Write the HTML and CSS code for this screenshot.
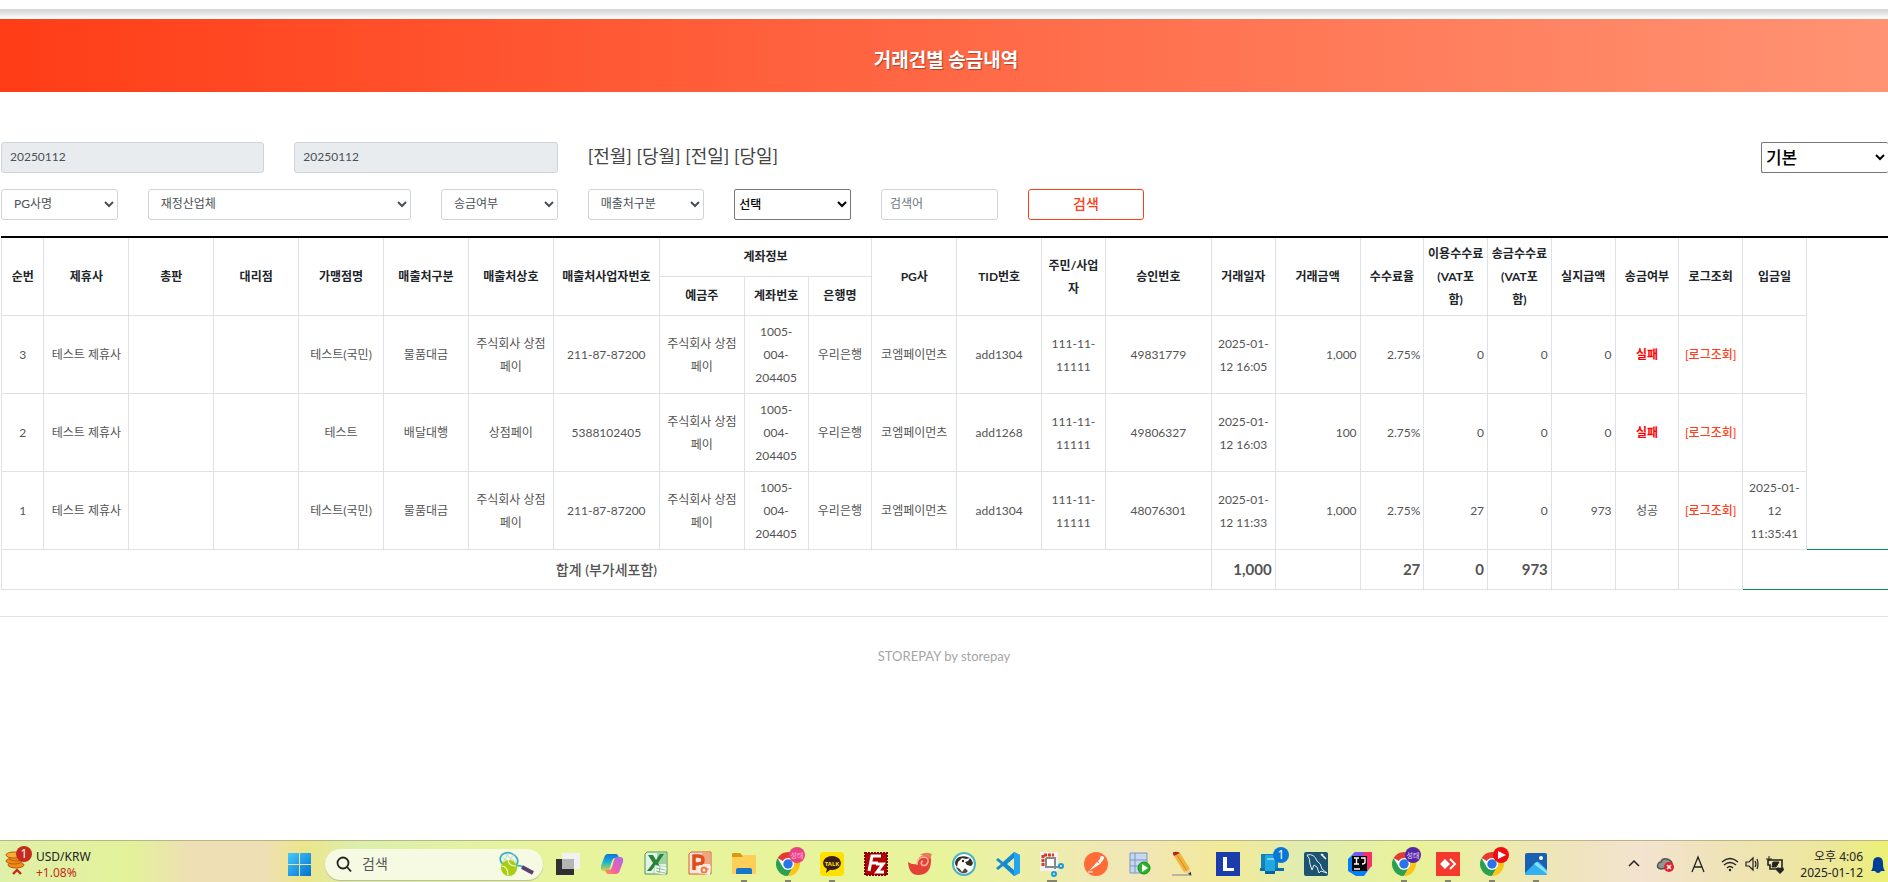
FILE: index.html
```html
<!DOCTYPE html>
<html lang="ko">
<head>
<meta charset="utf-8">
<title>거래건별 송금내역</title>
<link rel="stylesheet" href="styles.css">
</head>
<body>
<div class="topbar"></div>
<header class="hero"><h1 class="hero-title">거래건별 송금내역</h1></header>

<main class="content">
  <form class="filters">
    <input class="control span-2" type="text" aria-label="시작일" value="20250112" readonly>
    <input class="control span-2" type="text" aria-label="종료일" value="20250112" readonly>
    <nav class="ranges"><a href="#">[전월]</a> <a href="#">[당월]</a> <a href="#">[전일]</a> <a href="#">[당일]</a></nav>
    <select class="plain plain-large" aria-label="보기"><option>기본</option></select>

    <select class="control first" aria-label="PG사명"><option>PG사명</option></select>
    <select class="control span-2" aria-label="재정산업체"><option>재정산업체</option></select>
    <select class="control" aria-label="송금여부"><option>송금여부</option></select>
    <select class="control" aria-label="매출처구분"><option>매출처구분</option></select>
    <select class="plain" aria-label="검색조건"><option>선택</option></select>
    <input class="control" type="text" aria-label="검색어" placeholder="검색어">
    <button class="search-button" type="button">검색</button>
  </form>

  <table class="ledger">
    <colgroup>
      <col class="w2"><col class="w4"><col class="w4"><col class="w4"><col class="w4"><col class="w4"><col class="w4"><col class="w5">
      <col class="w4"><col class="w3"><col class="w3"><col class="w4"><col class="w4"><col class="w3"><col class="w5"><col class="w3">
      <col class="w4"><col class="w3"><col class="w3"><col class="w3"><col class="w3"><col class="w3"><col class="w3"><col class="w3"><col>
    </colgroup>
    <thead>
      <tr>
        <th rowspan="2">순번</th><th rowspan="2">제휴사</th><th rowspan="2">총판</th><th rowspan="2">대리점</th><th rowspan="2">가맹점명</th><th rowspan="2">매출처구분</th><th rowspan="2">매출처상호</th><th rowspan="2">매출처사업자번호</th>
        <th colspan="3">계좌정보</th>
        <th rowspan="2">PG사</th><th rowspan="2">TID번호</th><th rowspan="2">주민/사업자</th><th rowspan="2">승인번호</th><th rowspan="2">거래일자</th><th rowspan="2">거래금액</th><th rowspan="2">수수료율</th><th rowspan="2">이용수수료<br>(VAT포<br>함)</th><th rowspan="2">송금수수료<br>(VAT포<br>함)</th><th rowspan="2">실지급액</th><th rowspan="2">송금여부</th><th rowspan="2">로그조회</th><th rowspan="2">입금일</th><td class="open" rowspan="2"></td>
      </tr>
      <tr><th>예금주</th><th>계좌번호</th><th>은행명</th></tr>
    </thead>
    <tbody>
      <tr>
        <td>3</td><td>테스트 제휴사</td><td></td><td></td><td>테스트(국민)</td><td>물품대금</td><td>주식회사 상점페이</td><td>211-87-87200</td><td>주식회사 상점페이</td><td>1005-004-204405</td><td>우리은행</td><td>코엠페이먼츠</td><td>add1304</td><td>111-11-11111</td><td>49831779</td><td>2025-01-12 16:05</td>
        <td class="num">1,000</td><td class="num">2.75%</td><td class="num">0</td><td class="num">0</td><td class="num">0</td><td class="fail">실패</td><td><a class="log" href="#">[로그조회]</a></td><td></td><td class="open"></td>
      </tr>
      <tr>
        <td>2</td><td>테스트 제휴사</td><td></td><td></td><td>테스트</td><td>배달대행</td><td>상점페이</td><td>5388102405</td><td>주식회사 상점페이</td><td>1005-004-204405</td><td>우리은행</td><td>코엠페이먼츠</td><td>add1268</td><td>111-11-11111</td><td>49806327</td><td>2025-01-12 16:03</td>
        <td class="num">100</td><td class="num">2.75%</td><td class="num">0</td><td class="num">0</td><td class="num">0</td><td class="fail">실패</td><td><a class="log" href="#">[로그조회]</a></td><td></td><td class="open"></td>
      </tr>
      <tr>
        <td>1</td><td>테스트 제휴사</td><td></td><td></td><td>테스트(국민)</td><td>물품대금</td><td>주식회사 상점페이</td><td>211-87-87200</td><td>주식회사 상점페이</td><td>1005-004-204405</td><td>우리은행</td><td>코엠페이먼츠</td><td>add1304</td><td>111-11-11111</td><td>48076301</td><td>2025-01-12 11:33</td>
        <td class="num">1,000</td><td class="num">2.75%</td><td class="num">27</td><td class="num">0</td><td class="num">973</td><td>성공</td><td><a class="log" href="#">[로그조회]</a></td><td>2025-01-12 11:35:41</td><td class="open lined"></td>
      </tr>
    </tbody>
    <tfoot>
      <tr class="total">
        <td colspan="15">합계 (부가세포함)</td><td class="num">1,000</td><td></td><td class="num">27</td><td class="num">0</td><td class="num">973</td><td></td><td></td><td></td><td class="open lined" colspan="2"></td>
      </tr>
    </tfoot>
  </table>
</main>

<footer class="footer">STOREPAY by storepay</footer>

<div class="taskbar">
  <div class="widget">
    <svg class="widget-icon" width="34" height="42" viewBox="0 0 34 42">
      <g fill="#ef8a17" stroke="#b95c08"><ellipse cx="16" cy="25" rx="8" ry="3"/><ellipse cx="14" cy="21" rx="8" ry="3"/><ellipse cx="17" cy="18" rx="8" ry="3"/><ellipse cx="14" cy="15" rx="8" ry="3" fill="#ffad32"/></g>
      <path d="M13 34l4-4 4 4" fill="none" stroke="#c42b1c" stroke-width="2.4"/>
      <circle cx="24" cy="14" r="8" fill="#c42b1c"/><text x="24" y="18" text-anchor="middle" font-size="12" fill="#fff">1</text>
    </svg>
    <div class="widget-text"><span>USD/KRW</span><span class="rise">+1.08%</span></div>
  </div>
  <svg class="app" viewBox="0 0 44 42"><defs><linearGradient id="win" x1="0" y1="0" x2="1" y2="1"><stop offset="0" stop-color="#47c9fa"/><stop offset="1" stop-color="#0071d2"/></linearGradient></defs><path fill="url(#win)" d="M11 13h11v11H11zM23 13h11v11H23zM11 25h11v11H11zM23 25h11v11H23z"/></svg>
  <div class="search">
    <svg width="18" height="18" viewBox="0 0 18 18" fill="none" stroke="#222" stroke-width="1.8"><circle cx="8" cy="8" r="5.5"/><path d="M12 12l4 4.500"/></svg>
    <label class="search-label" for="q">검색</label><input class="search-input" id="q" type="text">
    <svg width="36" height="26" viewBox="0 0 36 26">
      <ellipse cx="10" cy="9" rx="9" ry="7" transform="rotate(22 10 9)" fill="#f1f6ea" stroke="#39b6b8" stroke-width="1.8"/><path d="M3 6l13 9M6 3l12 9M3 12l7-10M7 15l8-12" stroke="#b9c9b6" stroke-width=".6"/>
      <path d="M16 15q4-1 8 1" fill="none" stroke="#39b6b8" stroke-width="1.800"/><path d="M23 16l11 6" stroke="#564170" stroke-width="4"/><circle cx="10" cy="17" r="8" fill="#a9cc14"/><path d="M3 15q6 1 6 9M9 9q1 6 8 6" fill="none" stroke="#f5fbd2" stroke-width="1.200"/>
    </svg>
  </div>
  <div class="apps">
    <svg class="app" viewBox="0 0 44 42"><path d="M10 19h18v16H10z" fill="#303030"/><path d="M16 13h18v16H16z" fill="#f1f1f1"/><path d="M16 19h12v10H16z" fill="#b5b5b5"/></svg>
    <svg class="app" viewBox="0 0 44 42"><defs><linearGradient id="cpa" x1="0" y1="0" x2="0" y2="1"><stop offset="0" stop-color="#1470dd"/><stop offset=".5" stop-color="#19b7cf"/><stop offset="1" stop-color="#e5cf3b"/></linearGradient><linearGradient id="cpb" x1="1" y1="0" x2="0" y2="1"><stop offset="0" stop-color="#a66df0"/><stop offset=".6" stop-color="#ef5faa"/><stop offset="1" stop-color="#ff9848"/></linearGradient></defs><path d="M18 14h8q2 0 3 4h-4q-2 0-3 3l-2 7q-1 3-4 3h-2q-4 0-3-5l3-8q1-4 4-4z" fill="url(#cpa)"/><path d="M26 34h-8q-2 0-3-4h4q2 0 3-3l2-7q1-3 4-3h2q4 0 3 5l-3 8q-1 4-4 4z" fill="url(#cpb)"/></svg>
    <svg class="app" viewBox="0 0 44 42"><path d="M13 12h20v22H11V14z" fill="#e4f2e3" stroke="#4d9557"/><path d="M23 13h9v11h-9z" fill="#9fd29f"/><path d="M14 15h5l3 5 4-6h4l-6 9 5 8h-5l-3-5-4 5h-4l6-8z" fill="#26843a"/><path d="M21 25l12 2-2 8-11-2z" fill="#f5faf4" stroke="#91b894" stroke-width=".5"/><path d="M22 28l9 2M22 31l9 2M26 26l-1 7" stroke="#67a66d" stroke-width=".7"/></svg>
    <svg class="app" viewBox="0 0 44 42"><path d="M13 12h20v22H11V14z" fill="#fae5d6" stroke="#d35f34"/><path d="M24 13h8v11h-8z" fill="#f1a680"/><path d="M16 30V16h4q5 0 5 4t-5 4h-3" fill="none" stroke="#df4c1f" stroke-width="3.500"/><path d="M21 25l12 1-1 9-12-2z" fill="#fff3ea"/><circle cx="26" cy="30" r="2.500" fill="none" stroke="#ee7a43" stroke-width="2"/><path d="M27 29h4" stroke="#ee7a43"/></svg>
    <svg class="app" viewBox="0 0 44 42"><path d="M10 14q0-1 1-1h7l3 3v4H10z" fill="#d99a11"/><path d="M10 17h10l2-2h11q1 0 1 1v17q0 1-1 1H10z" fill="#ffcf57"/><path d="M14 34v-4q0-2 2-2h12q2 0 2 2v4z" fill="#1676c8"/><path class="run" d="M19 40h6v2h-6z"/></svg>
    <svg class="app" viewBox="0 0 44 42"><g id="chrome"><circle cx="22" cy="24" r="12" fill="#fff"/><path d="M22 24L11.600 18A12 12 0 0 1 32.400 18H22z" fill="#e33b2e"/><path d="M11.600 18A12 12 0 0 0 22 36l5.200-9L22 24l-5.200 3z" fill="#2ca14b"/><path d="M32.400 18A12 12 0 0 1 22 36l5.200-9a6 6 0 0 0 0-6L22 18z" fill="#fbc515"/><circle cx="22" cy="24" r="6" fill="#fff"/><circle cx="22" cy="24" r="4.700" fill="#2b73e8"/><path class="run" d="M19 40h6v2h-6z"/></g><circle cx="31" cy="15" r="8" fill="#e84283"/><text x="31" y="18" text-anchor="middle" font-size="7" fill="#fbd">성태</text></svg>
    <svg class="app" viewBox="0 0 44 42"><rect x="10" y="12" width="24" height="24" rx="3" fill="#ffe100"/><ellipse cx="22" cy="23" rx="9" ry="7" fill="#3a1d1f"/><path d="M17 28l-1 5 5-4z" fill="#3a1d1f"/><text x="22" y="26" text-anchor="middle" font-size="6" font-weight="700" fill="#ffe100">TALK</text><path class="run" d="M19 40h6v2h-6z"/></svg>
    <svg class="app" viewBox="0 0 44 42"><path d="M11 13h22v22H11z" fill="#b00000" stroke="#800000" stroke-width="2" stroke-dasharray="2 1"/><path d="M15 31l3-15h9M17 23h7M22 24h7l-6 8h7" fill="none" stroke="#fff" stroke-width="3"/></svg>
    <svg class="app" viewBox="0 0 44 42"><path d="M10 22q4 3 9 2 0-8 8-9 7 0 6 7-1 13-13 13-9 0-10-13z" fill="#e54237"/><path d="M19 25q0-7 6-8 6 0 5 5-2 5-6 3-2-3 1-4" fill="none" stroke="#ffb39c" stroke-width="1.600"/><path d="M22 15q5-4 12-1l-2 5q-4-4-10-4z" fill="#ee7a5c"/></svg>
    <svg class="app" viewBox="0 0 44 42"><circle cx="22" cy="24" r="11" fill="#fff" stroke="#4bb4c3" stroke-width="2"/><path d="M13 24q0-5 4-7 6-2 11 1l-4 1-4-1-4 4-1 5z" fill="#342c2a"/><path d="M28 18q5 5 1 8l-4-1-2-3 3-1z" fill="#342c2a"/><path d="M14 27q4 1 6 5l3-4 3 3q-2 3-6 2-4-1-6-6z" fill="#554a46"/><circle cx="21" cy="21" r="1.200" fill="#222"/></svg>
    <svg class="app" viewBox="0 0 44 42"><path d="M28 12l6 3v18l-6 3-11-10-5 4-2-2 5-4-5-4 2-2 5 4zM28 18l-7 6 7 6z" fill="#138bd2" fill-rule="evenodd"/><path d="M28 12l6 3v18l-6 3z" fill="#25a5f0"/></svg>
    <svg class="app" viewBox="0 0 44 42"><rect x="10" y="12" width="18" height="19" rx="1" fill="#f2f2f2"/><path d="M13 26V15h11" fill="none" stroke="#dc3b17" stroke-width="3" stroke-dasharray="3 1"/><path d="M17 19h8v8h-8z" fill="#fff"/><path d="M16 18h9v11M16 18v9h13" fill="none" stroke="#888" stroke-width="2"/><g fill="none" stroke="#189bde" stroke-width="2"><circle cx="31" cy="26" r="2"/><circle cx="24" cy="34" r="2"/></g><path class="run" d="M17 40h10v2H17z"/></svg>
    <svg class="app" viewBox="0 0 44 42"><circle cx="22" cy="24" r="12" fill="#ff6c37"/><path d="M15 31l8-9 3 2zM24 21l3-3 2 2-3 4z" fill="#fff"/><circle cx="28" cy="18" r="2" fill="#fff"/><path d="M14 32h5" stroke="#fff"/></svg>
    <svg class="app" viewBox="0 0 44 42"><g fill="#c4d8f0" stroke="#7c97c0"><path d="M12 13h17v20H12z"/><path d="M12 20h17M12 26h17M17 13v20"/></g><circle cx="26" cy="28" r="6" fill="#28b52d" stroke="#148a1a"/><path d="M24 24l6 4-6 4z" fill="#fff"/></svg>
    <svg class="app" viewBox="0 0 44 42"><path d="M10 35h20" stroke="#aaa49b" stroke-width="1.500"/><path d="M12 16l6-3 10 16-6 3z" fill="#f1b43c"/><path d="M15 15l10 16" stroke="#d98b1c"/><path d="M12 16l6-3-2-1q-6-1-5 2z" fill="#b52020"/><path d="M22 32l6-3 1 6z" fill="#eacb9b"/><path d="M26 34l3-2v3z" fill="#222"/></svg>
    <svg class="app" viewBox="0 0 44 42"><path d="M10 12h24v24H10z" fill="#1d3cab"/><path d="M17 31V17h4v11h7v3z" fill="#fff"/></svg>
    <svg class="app" viewBox="0 0 44 42"><path d="M11 14h17v14H11z" fill="#1381bc"/><path d="M10 28h24v3H10z" fill="#0871ad"/><path d="M15 15h10v17H15z" fill="#20a8e2"/><path d="M15 31h10v3H15z" fill="#096292"/><path d="M17 18h7v2h-7z" fill="#7ad6f7"/><circle cx="31" cy="15" r="8" fill="#0878d4"/><text x="31" y="19" text-anchor="middle" font-size="12" fill="#fff">1</text></svg>
    <svg class="app" viewBox="0 0 44 42"><rect x="10" y="12" width="24" height="24" rx="2" fill="#1d5271"/><path d="M13 15q7-2 10 6 4 2 5 8l5 4-6-2-2 2-2-6-3-2-2 5-2-6q0-6-3-9z" fill="none" stroke="#d9edf3"/><path d="M27 14l5 5M29 14l-1 2" stroke="#fff" stroke-width="1.500"/></svg>
    <svg class="app" viewBox="0 0 44 42"><path d="M17 12h17v13l-8 11h-8l-8-5V19z" fill="#067efa"/><path d="M19 12h15v14l-6 5V17H15z" fill="#f82f69"/><path d="M17 12h10l-4 5H13z" fill="#7457f5"/><path d="M14 16h15v15H14z" fill="#050505"/><path d="M16 18h5M18.500 18v6M16 24h5M23 18h4v4q0 2-3 2M16 29h6" fill="none" stroke="#fff" stroke-width="1.400"/></svg>
    <svg class="app" viewBox="0 0 44 42"><use href="#chrome"/><circle cx="31" cy="15" r="8" fill="#5428a5"/><text x="31" y="18" text-anchor="middle" font-size="7" fill="#e5d6ff">성태</text></svg>
    <svg class="app" viewBox="0 0 44 42"><path d="M10 12h24v24H10z" fill="#f4392f"/><path d="M14 24l5-5 5 5-5 5z" fill="#fff"/><path d="M24 19l5 5-5 5" fill="none" stroke="#fff" stroke-width="2"/><path class="run" d="M19 40h6v2h-6z"/></svg>
    <svg class="app" viewBox="0 0 44 42"><use href="#chrome"/><circle cx="31" cy="15" r="8" fill="#f10b12"/><path d="M28 11l8 4-8 4z" fill="#fff"/></svg>
    <svg class="app" viewBox="0 0 44 42"><rect x="11" y="13" width="22" height="22" rx="2" fill="#1a60b0"/><path d="M11 33l11-11q1-1 3 0l8 8v3q0 2-2 2H13q-2 0-2-2z" fill="#31b1ef"/><path d="M20 24l3-2 10 9v3z" fill="#8ae0fa"/><circle cx="27" cy="18" r="2" fill="#fff"/><path class="run" d="M19 40h6v2h-6z"/></svg>
  </div>
  <div class="tray">
    <svg width="138" height="42" viewBox="0 0 138 42" fill="none" stroke="#222" stroke-width="1.500">
      <path d="M5 26l5-5 5 5"/>
      <path d="M37 29q-5-1-3-5 1-2 3-2 1-4 6-3 4 1 5 4v4z" fill="#929695" stroke="#555"/><circle cx="45" cy="27" r="5" fill="#e2212d" stroke="none"/><path d="M43 25l4 4M47 25l-4 4" stroke="#fff"/>
      <path d="M68 32l6-15 6 15M70 27h8" stroke-width="1.300"/>
      <path d="M98 22q8-7 16 0M100 25q6-5 12 0M103 28q3-3 6 0" stroke-width="1.400"/><circle cx="106" cy="30" r="1.200" fill="#222" stroke="none"/>
      <path d="M122 22h3l4-4v12l-4-4h-3zM131 21q2 3 0 6M133 19q2 5 0 10" stroke-width="1.200"/>
    </svg>
    <svg width="26" height="42" viewBox="0 0 26 42"><path d="M6 20h14v9H8v-4H6z" fill="none" stroke="#222" stroke-width="1.600"/><path d="M7 16v5M4 19h6M11 22h6l-3 5h-4z" stroke="#222" fill="#222"/><path d="M18 34l-4-4q0-4 4-2 4-2 4 2z" fill="#222"/></svg>
    <div class="clock"><span>오후 4:06</span><span>2025-01-12</span></div>
    <svg width="25" height="42" viewBox="0 0 25 42"><path d="M8 31q2-2 2-8 0-6 5-6t5 6q0 6 2 8z" fill="#003f96"/><path d="M12 31h6q-1 2-3 2t-3-2z" fill="#003f96"/></svg>
  </div>
</div>
</body>
</html>
```

FILE: styles.css
```css
* { box-sizing: border-box; }

body {
  display: flex;
  flex-direction: column;
  min-height: 100vh;
  margin: 0;
  overflow-x: hidden;
  background: #fff;
  color: #545454;
  font: 12px/23px Lato, "Noto Sans CJK KR", sans-serif;
}

a { color: inherit; text-decoration: none; }

.topbar {
  height: 19px;
  background: linear-gradient(#fff 0 9px, #d8d8d8 9px 11px, #fcfcfc 18px);
}

.hero {
  padding: 27px 0 18px;
  background: linear-gradient(90deg, #ff3d17, #ff9373);
  text-align: center;
}

.hero-title {
  margin: 0;
  padding-left: 4px;
  color: #fff;
  font-size: 19px;
  font-weight: 700;
  line-height: 28px;
  text-shadow: 1px 1px 1px rgba(0, 0, 0, .35);
}

.content { padding: 50px 0 26px 1px; }

.filters {
  display: grid;
  grid-template-columns: repeat(12, minmax(0, 1fr)) 127px;
  gap: 16px 30px;
  margin-bottom: 16px;
}

.span-2 { grid-column: span 2; }
.first { grid-column-start: 1; }

.control {
  width: 100%;
  height: 31px;
  padding: 0 8px 3px;
  border: 1px solid #ced4da;
  border-radius: 3px;
  background: #fff;
  color: #495057;
  font: inherit;
}

.control:read-only:not(select) { background: #e9ecef; }
.control::placeholder { color: #6c757d; }

.ranges {
  grid-column: span 8;
  color: #444;
  font-size: 18px;
  line-height: 29px;
}

.plain {
  width: 100%;
  height: 31px;
  border: 1px solid #767676;
  border-radius: 2px;
  background: #fff;
  color: #000;
  font: 500 12px Lato, "Noto Sans CJK KR", sans-serif;
}

.plain-large { border-right: 0; font-size: 17px; }

.search-button {
  height: 31px;
  padding: 0 0 4px;
  border: 1px solid #ff3d17;
  border-radius: 3px;
  background: #fff;
  color: #ff3d17;
  font: 500 14px Lato, "Noto Sans CJK KR", sans-serif;
}

.ledger {
  width: 100%;
  border-collapse: collapse;
  border-top: 2px solid #000;
  table-layout: fixed;
  text-align: center;
}

.w2 { width: 2.25%; }
.w3 { width: 3.38%; }
.w4 { width: 4.5%; }
.w5 { width: 5.625%; }

.ledger th,
.ledger td {
  padding: 4px 3px;
  border: 1px solid #dee2e6;
  vertical-align: middle;
}

.ledger th { padding: 4px 2px; color: #212529; font-weight: 700; }
.ledger thead tr { height: 39px; }
.ledger thead tr:first-child > * { border-top: 2px solid #000; }
.ledger .num { text-align: right; }
.ledger .open { border-width: 0; }
.ledger .lined { border-bottom: 1px solid #079150; }
.ledger thead .open { border-top-width: 2px; }

.fail { color: #f00; font-weight: 700; }
.log { color: #ff3d17; font-weight: 500; }

.ledger .total td { height: 40px; font-size: 14px; font-weight: 500; }
.ledger .total .num { font-size: 15px; font-weight: 700; }

.footer {
  padding: 28px 0;
  border-top: 1px solid #dee2e6;
  color: #a5a5a5;
  font-size: 13px;
  text-align: center;
}

.taskbar {
  display: flex;
  align-items: center;
  height: 42px;
  margin-top: auto;
  background: linear-gradient(90deg, #dff0a8, #e3f29a 7%, #eedfb4 10%, #eedfb4 14%, #ece58b 16%, #dcefac 19%, #e8f49c 29%, #e8f49c 50%, #f1e6b8 60%, #f2ea98 65%, #e0edb0 69%, #e9f298 75%, #efe4bc 83%, #f3e3cf 87%, #efe3b8 91%, #ede79a 97%, #ecf074);
  box-shadow: inset 0 1px #b7b68b;
  color: #222;
  font: 12px/16px "Noto Sans", "Noto Sans CJK KR", sans-serif;
}

.widget { display: flex; align-items: center; flex: 0 0 277px; }
.widget-text { display: flex; flex-direction: column; padding: 7px 0 0 2px; }
.rise { color: #c42b1c; }

.app { display: block; flex: none; width: 44px; height: 42px; }
.run { fill: #85856a; }
.apps { display: flex; }

.search {
  display: flex;
  align-items: center;
  gap: 9px;
  width: 218px;
  height: 31px;
  margin: 6px 3px 0 4px;
  padding: 0 8px 0 10px;
  border-radius: 16px;
  background: #f6fae2;
  box-shadow: 0 1px 1px #b8bd94;
}

.search-label { color: #555; font-size: 14px; }
.search-input { flex: 1; min-width: 0; border: 0; background: none; }

.tray { display: flex; align-items: center; margin-left: auto; }
.clock { display: flex; flex-direction: column; width: 75px; padding-top: 7px; text-align: right; }
```
